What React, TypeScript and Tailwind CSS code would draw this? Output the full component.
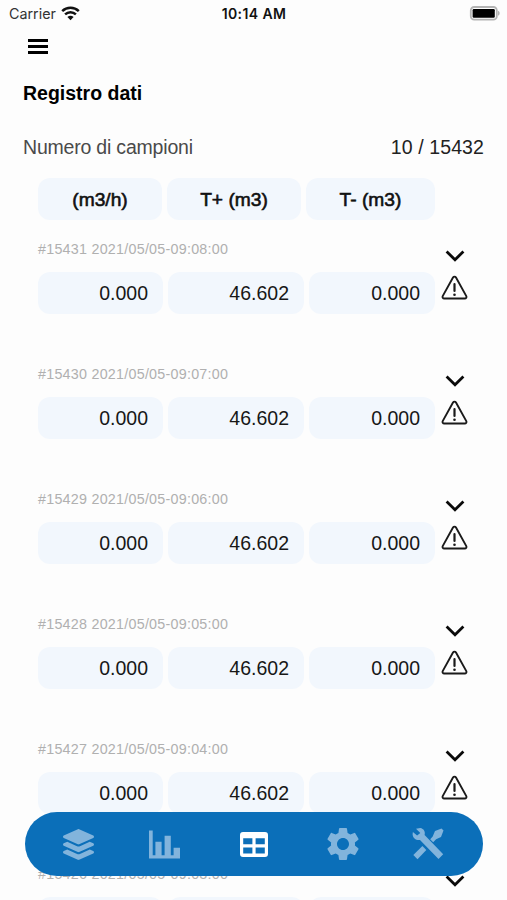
import { FaLayerGroup } from 'react-icons/fa'
import { MdSettings } from 'react-icons/md'

interface Sample {
  id: number
  time: string
  values: string[]
}

const SAMPLES: Sample[] = [
  { id: 15431, time: '2021/05/05-09:08:00', values: ['0.000', '46.602', '0.000'] },
  { id: 15430, time: '2021/05/05-09:07:00', values: ['0.000', '46.602', '0.000'] },
  { id: 15429, time: '2021/05/05-09:06:00', values: ['0.000', '46.602', '0.000'] },
  { id: 15428, time: '2021/05/05-09:05:00', values: ['0.000', '46.602', '0.000'] },
  { id: 15427, time: '2021/05/05-09:04:00', values: ['0.000', '46.602', '0.000'] },
  { id: 15426, time: '2021/05/05-09:03:00', values: ['', '', ''] },
]

function WifiIcon() {
  return (
    <svg width="19" height="15" viewBox="0 0 19 15" fill="none" stroke="#111" strokeWidth="2.5">
      <path d="M1.2 5.2a12 12 0 0 1 16.6 0" />
      <path d="M4.1 8.4a7.8 7.8 0 0 1 10.8 0" />
      <path d="M9.5 14.3 6.4 11.1a4.5 4.5 0 0 1 6.2 0z" fill="#111" stroke="none" />
    </svg>
  )
}

function BatteryIcon() {
  return (
    <svg width="32" height="15" viewBox="0 0 32 15">
      <rect x="1.8" y="1" width="26" height="12.6" rx="3.4" fill="#fff" stroke="#b4b4b4" strokeWidth="1.8" />
      <rect x="3.6" y="3" width="22.2" height="8.8" rx="1.2" fill="#000" />
      <path d="M29 4.8c2.2.8 2.2 4.2 0 5z" fill="#b4b4b4" />
    </svg>
  )
}

function ChevronIcon() {
  return (
    <svg width="20" height="12" viewBox="0 0 20 12" fill="none" stroke="#0a0a0a" strokeWidth="2.8">
      <path d="m1.6 1.5 8.4 8.2 8.4-8.2" />
    </svg>
  )
}

function WarningIcon() {
  return (
    <svg width="27" height="26" viewBox="0 0 27 26" fill="none" stroke="#1a1a1a" strokeLinejoin="round">
      <path d="M12 2.5a1.75 1.75 0 0 1 3 0l10.3 18.6c.6 1.2-.2 2.4-1.5 2.4H3.2c-1.3 0-2.1-1.2-1.5-2.4z" strokeWidth="1.9" />
      <path d="M13.5 9v7" strokeWidth="2.2" strokeLinecap="round" />
      <circle cx="13.5" cy="19.8" r="1.3" fill="#1a1a1a" stroke="none" />
    </svg>
  )
}

function ChartIcon() {
  return (
    <svg width="32" height="29" viewBox="0 0 32 29" fill="currentColor">
      <path d="M0 .5h3.7v24.7h2.7V11.8h6.2v13.4h3V5.8h6.2v19.4h2.8v-7.5H31v10.8H0z" />
    </svg>
  )
}

function TableIcon() {
  return (
    <svg width="28" height="25" viewBox="0 0 28 25" fill="currentColor" fillRule="evenodd">
      <path d="M3 0h22a3 3 0 0 1 3 3v19a3 3 0 0 1-3 3H3a3 3 0 0 1-3-3V3a3 3 0 0 1 3-3zM3.2 6.2v6h9.2v-6zm12.4 0v6h9.2v-6zM3.2 15.4v6h9.2v-6zm12.4 0v6h9.2v-6z" />
    </svg>
  )
}

function ToolsIcon() {
  return (
    <svg width="32" height="32" viewBox="0 0 32 32" fill="currentColor">
      <path d="M4 .8 8.3 0c3.5.7 5.2 3.5 4.3 6.9l18.6 19.3-4.7 4.9L8 11.9C4.5 12.6.8 10.5.6 6.2L.9 4l4.2 3.6 3.2-2.7z" />
      <path d="M20.7 8.6 23 2.9 29.5.5l2 2L29 9l-4.9 2.3-2.9 3-3-3z" />
      <path d="m10.4 18 3.9 4-8.8 9.3L1.3 27z" />
    </svg>
  )
}

function ValueCell({ value }: { value: string }) {
  return (
    <div className="flex h-[42px] items-center justify-end rounded-xl bg-[#f2f7fd] pt-[2px] pr-[15px] text-[19.5px] text-[#171717]">
      {value}
    </div>
  )
}

function SampleRow({ sample }: { sample: Sample }) {
  return (
    <div className="flex h-[125px] shrink-0">
      <div className="w-[397px]">
        <p className="h-[31px] text-[14.3px] leading-[17px] tracking-[0.25px] text-[#b0b0b0]">
          #{sample.id} {sample.time}
        </p>
        <div className="grid grid-cols-[125px_136px_126px] gap-[5px]">
          {sample.values.map((value, i) => (
            <ValueCell key={i} value={value} />
          ))}
        </div>
      </div>
      <div className="ml-[6px] flex w-[27px] flex-col items-center pt-[9px]">
        <ChevronIcon />
        <div className="mt-[13px]">
          <WarningIcon />
        </div>
      </div>
    </div>
  )
}

export default function App() {
  return (
    <div className="relative flex h-[900px] w-[507px] flex-col overflow-hidden bg-[#fdfdfd] font-['Liberation_Sans',Arial,sans-serif] text-[#111]">
      <div className="grid h-[26px] shrink-0 grid-cols-[1fr_70px_1fr] items-center pr-[6px] pl-[9px] font-['Inter',sans-serif]">
        <div className="flex items-center gap-[5px]">
          <span className="pt-[2px] text-[14.3px] text-[#333]">Carrier</span>
          <WifiIcon />
        </div>
        <span className="-ml-[2px] pt-px text-center text-[14px] font-semibold tracking-[0.4px] whitespace-nowrap">10:14 AM</span>
        <div className="flex justify-end">
          <BatteryIcon />
        </div>
      </div>

      <button className="mt-[13px] ml-7 flex h-[15px] w-[20px] shrink-0 flex-col justify-between">
        <span className="h-[3px] w-full bg-black" />
        <span className="h-[3px] w-full bg-black" />
        <span className="h-[3px] w-full bg-black" />
      </button>

      <h1 className="mt-[27px] ml-[23px] h-6 shrink-0 text-[19.5px] leading-6 font-bold text-black">Registro dati</h1>

      <div className="mt-[30px] flex h-6 shrink-0 justify-between pr-[23px] pl-[23px] text-[19.5px] leading-6">
        <span className="tracking-[-0.2px] text-[#4a4a4a]">Numero di campioni</span>
        <span className="tracking-[0.1px] text-[#222]">10 / 15432</span>
      </div>

      <div className="mt-[19px] ml-[38px] grid h-[42px] w-[397px] shrink-0 grid-cols-[124px_134px_129px] gap-[5px] text-[19.2px] [-webkit-text-stroke:0.6px_#111]">
        <div className="flex items-center justify-center rounded-xl bg-[#f2f7fd] pt-[2px]">(m3/h)</div>
        <div className="flex items-center justify-center rounded-xl bg-[#f2f7fd] pt-[2px]">T+ (m3)</div>
        <div className="flex items-center justify-center rounded-xl bg-[#f2f7fd] pt-[2px]">T- (m3)</div>
      </div>

      <div className="mt-[21px] ml-[38px] flex flex-col">
        {SAMPLES.map(sample => (
          <SampleRow key={sample.id} sample={sample} />
        ))}
      </div>

      <nav className="absolute top-[812px] left-[25px] grid h-16 w-[458px] grid-cols-[107px_65px_113px_66px_104px] items-center justify-items-center rounded-full bg-[#0b6fb9] text-[#82b4dc]">
        <FaLayerGroup size={31} />
        <ChartIcon />
        <span className="text-white">
          <TableIcon />
        </span>
        <MdSettings size={40} />
        <ToolsIcon />
      </nav>
    </div>
  )
}
